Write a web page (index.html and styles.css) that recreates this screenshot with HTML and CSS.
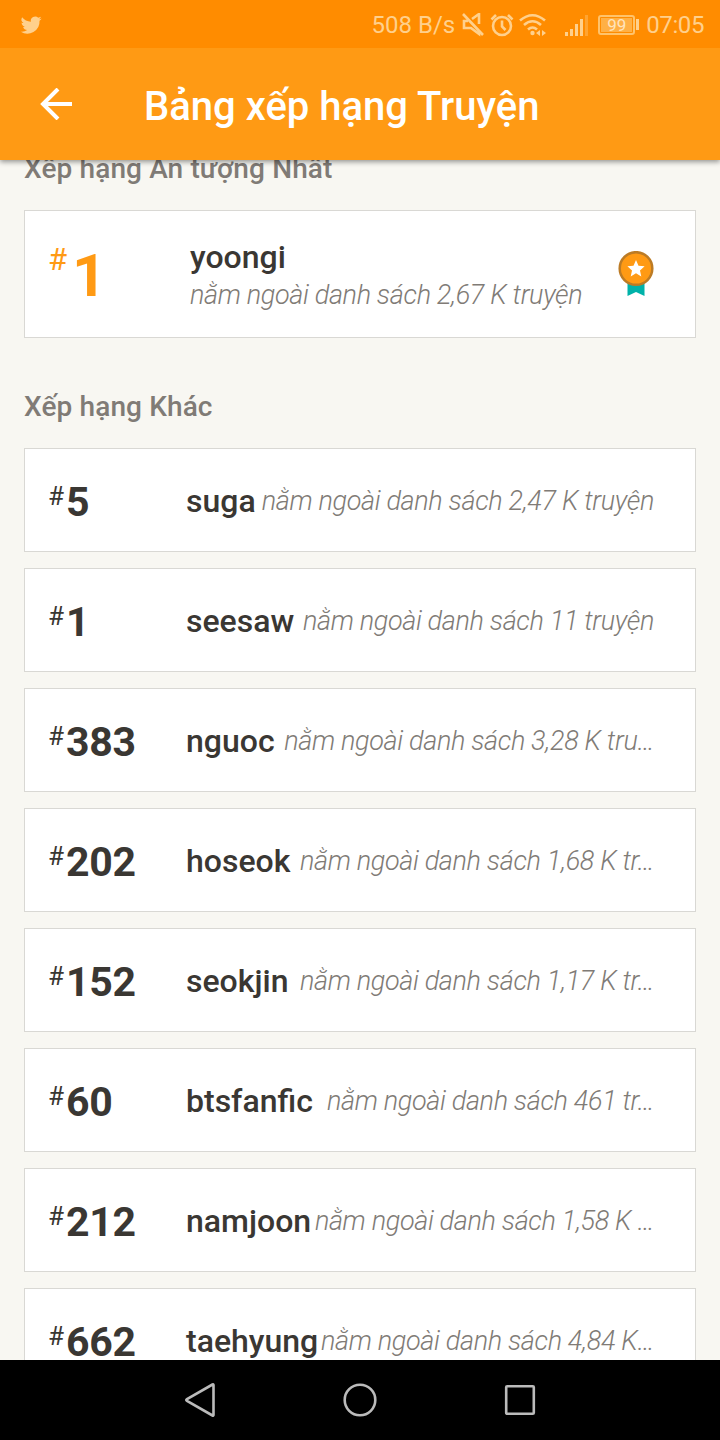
FILE: index.html
```
<!DOCTYPE html>
<html lang="vi">
<head>
    <meta charset="UTF-8">
    <meta name="viewport" content="width=device-width, initial-scale=1.0">
    <title>Bảng xếp hạng Truyện</title>
    <link rel="stylesheet" href="styles.css">
</head>
<body>
    <!-- Phone status bar -->
    <div class="status-bar">
        <svg class="twitter" width="22" height="24" viewBox="0 0 24 24"><path d="M23.6 4.9c-.8.4-1.7.6-2.7.8 1-.6 1.700-1.500 2-2.600-.9.5-1.900.9-3 1.100a4.700 4.700 0 0 0-8 4.300C8 8.300 4.600 6.400 2.300 3.600a4.700 4.700 0 0 0 1.500 6.300c-.8 0-1.500-.2-2.100-.6v.1c0 2.300 1.600 4.200 3.800 4.600-.7.2-1.400.2-2.100.1.600 1.900 2.300 3.200 4.400 3.300A9.500 9.500 0 0 1 .8 19.300a13.300 13.300 0 0 0 20.500-11.900c.9-.7 1.700-1.500 2.300-2.500z"/></svg>
        <div class="status-right">
            <span class="speed">508 B/s</span>
            <svg class="line mute" width="24" height="24" viewBox="0 0 24 24"><path d="M2 1l20 21M11 6l7-5v10M18 17v4l-8-6H3V8h4"/></svg>
            <svg class="line alarm" width="24" height="24" viewBox="0 0 24 24"><circle cx="12" cy="13" r="9"/><path d="M12 7.500v6l3.500 3.500M1.500 6.500L6 2M18 2l4.500 4.500"/></svg>
            <svg class="line wifi" width="30" height="24" viewBox="0 0 30 24"><path d="M1 7.500q12.500-10.500 25 0M5 12q8.500-7.500 17 0M9 16.500q4.500-4 9 0"/><circle class="solid" cx="13.500" cy="20" r="2.200"/><path class="solid" d="M21 17v6l-4-3zM23 17v6l4-3z"/></svg>
            <svg class="signal" width="24" height="24" viewBox="0 0 24 24"><path d="M0 19h3v4H0zM5 16h3v7H5zM10 11h3v12h-3zM15 6h3v17h-3z"/><path opacity=".35" d="M20 2h3v21h-3z"/></svg>
            <span class="battery"><span class="charge">99</span></span>
            <span class="battery-tip"></span>
            <span class="time">07:05</span>
        </div>
    </div>

    <header class="toolbar">
        <svg class="back" width="32" height="32" viewBox="0 0 32 32"><path d="M32 16H2M18 1L3 16l15 15"/></svg>
        <h1>Bảng xếp hạng Truyện</h1>
    </header>

    <main class="content">
        <h2>Xếp hạng Ấn tượng Nhất</h2>
        <section class="card best">
            <div class="rank"><span class="hash">#</span><span class="number">1</span></div>
            <div class="info">
                <span class="tag">yoongi</span>
                <span class="detail">nằm ngoài danh sách 2,67 K truyện</span>
            </div>
            <svg class="medal" width="36" height="46" viewBox="0 0 36 46">
                <path fill="#00b2a9" d="M9.500 30h17v15L18 41l-8.500 4z"/>
                <circle cx="18" cy="17.500" r="16.300" fill="#ff9a14" stroke="#bc7b25" stroke-width="2.500"/>
                <path fill="#fff" d="M18 9l2.500 5.700 6.100.6-4.600 4.100 1.300 6-5.300-3.100-5.300 3.100 1.300-6-4.600-4.100 6.100-.6z"/>
            </svg>
        </section>

        <h2>Xếp hạng Khác</h2>
        <section class="card">
            <div class="rank"><span class="hash">#</span><span class="number">5</span></div>
            <span class="tag">suga</span>
            <span class="detail">nằm ngoài danh sách 2,47 K truyện</span>
        </section>
        <section class="card">
            <div class="rank"><span class="hash">#</span><span class="number">1</span></div>
            <span class="tag">seesaw</span>
            <span class="detail">nằm ngoài danh sách 11 truyện</span>
        </section>
        <section class="card">
            <div class="rank"><span class="hash">#</span><span class="number">383</span></div>
            <span class="tag">nguoc</span>
            <span class="detail">nằm ngoài danh sách 3,28 K tru…</span>
        </section>
        <section class="card">
            <div class="rank"><span class="hash">#</span><span class="number">202</span></div>
            <span class="tag">hoseok</span>
            <span class="detail">nằm ngoài danh sách 1,68 K tr…</span>
        </section>
        <section class="card">
            <div class="rank"><span class="hash">#</span><span class="number">152</span></div>
            <span class="tag">seokjin</span>
            <span class="detail">nằm ngoài danh sách 1,17 K tr…</span>
        </section>
        <section class="card">
            <div class="rank"><span class="hash">#</span><span class="number">60</span></div>
            <span class="tag">btsfanfic</span>
            <span class="detail">nằm ngoài danh sách 461 tr…</span>
        </section>
        <section class="card">
            <div class="rank"><span class="hash">#</span><span class="number">212</span></div>
            <span class="tag">namjoon</span>
            <span class="detail">nằm ngoài danh sách 1,58 K …</span>
        </section>
        <section class="card">
            <div class="rank"><span class="hash">#</span><span class="number">662</span></div>
            <span class="tag">taehyung</span>
            <span class="detail">nằm ngoài danh sách 4,84 K…</span>
        </section>
    </main>

    <!-- Android navigation buttons -->
    <nav class="nav-bar">
        <svg width="34" height="36" viewBox="0 0 34 36"><path d="M30.500 3v30Q30.500 34 29.500 33.500L4 19Q2.500 18 4 17L29.500 2.500Q30.500 2 30.500 3z"/></svg>
        <svg width="34" height="36" viewBox="0 0 34 36"><circle cx="17" cy="18" r="15.300"/></svg>
        <svg width="34" height="36" viewBox="0 0 34 36"><rect x="3.200" y="4.200" width="27.600" height="27.600" rx="1"/></svg>
    </nav>
</body>
</html>
```
FILE: styles.css
```
* {
    box-sizing: border-box;
}

body {
    margin: 0;
    height: 1440px;
    display: flex;
    flex-direction: column;
    overflow: hidden;
    font-family: Roboto, "Noto Sans", sans-serif;
    background-color: #f8f7f2;
    color: #3a3733;
}

h1, h2 {
    margin: 0;
    font-weight: 500;
    white-space: nowrap;
}

svg {
    display: block;
    flex: none;
}

.status-bar {
    height: 48px;
    flex: none;
    display: flex;
    align-items: center;
    justify-content: space-between;
    padding: 1px 16px 0 20px;
    background-color: #ff8c00;
    color: #ffd08c;
    font-size: 24px;
    z-index: 2;
}

.twitter, .signal {
    fill: #ffd08c;
}

.status-right {
    display: flex;
    align-items: center;
}

.line {
    fill: none;
    stroke: #ffd08c;
    stroke-width: 2.6;
}

.solid {
    fill: #ffd08c;
    stroke: none;
}

.mute {
    margin-left: 6px;
}

.alarm {
    margin-left: 5px;
}

.wifi {
    margin-left: 5px;
}

.signal {
    margin-left: 16px;
}

.battery {
    width: 37px;
    height: 20px;
    margin-left: 9px;
    padding: 1px;
    border: 2px solid #ffc36b;
    border-radius: 3px;
}

.charge {
    display: block;
    height: 14px;
    background-color: #ffb045;
    font-size: 17px;
    line-height: 15px;
    text-align: center;
    color: #ffe4bd;
}

.battery-tip {
    width: 3px;
    height: 11px;
    margin: 0 7px 0 1px;
    background-color: #ffd08c;
}

.time {
    letter-spacing: -0.4px;
}

.toolbar {
    height: 112px;
    flex: none;
    display: flex;
    align-items: center;
    gap: 72px;
    padding-left: 40px;
    background-color: #ff9a14;
    color: #fff;
    box-shadow: 0 2px 5px rgba(0, 0, 0, 0.4);
    z-index: 1;
}

.toolbar h1 {
    font-size: 40px;
    padding-top: 4px;
}

.back {
    fill: none;
    stroke: #fff;
    stroke-width: 4;
}

.content {
    flex: 1;
    min-height: 0;
    overflow: hidden;
    padding: 0 24px;
}

.content h2 {
    height: 110px;
    padding-top: 52px;
    font-size: 28px;
    letter-spacing: 0.12px;
    line-height: 34px;
    color: #807b76;
}

/* first heading is partly scrolled under the toolbar */
.content h2:first-child {
    margin-top: -60px;
}

.card {
    height: 104px;
    display: flex;
    align-items: center;
    margin-bottom: 16px;
    padding: 1px 41px 0 23px;
    border: 1px solid #d9d8d4;
    background-color: #fff;
}

.rank {
    width: 138px;
    flex: none;
    display: flex;
    align-items: flex-start;
}

.hash {
    width: 18px;
    flex: none;
    font-size: 26px;
    line-height: 42px;
    font-weight: 400;
}

.number {
    padding-top: 2px;
    font-size: 41px;
    letter-spacing: -0.3px;
    line-height: 50px;
    font-weight: 700;
}

.tag {
    font-size: 32px;
    font-weight: 500;
}

.detail {
    flex: 1;
    font-size: 27px;
    letter-spacing: -0.35px;
    font-style: italic;
    font-weight: 300;
    text-align: right;
    white-space: nowrap;
    color: #807b76;
}

.best {
    height: 128px;
    margin-bottom: 0;
    padding-top: 0;
}

.best .rank {
    width: 142px;
    color: #ff9a14;
}

.best .hash {
    width: 24px;
    font-size: 31px;
    line-height: 46px;
}

.best .number {
    padding-top: 4px;
    font-size: 60px;
    line-height: 70px;
}

.info {
    flex: 1;
    display: flex;
    flex-direction: column;
    gap: 3px;
}

.best .detail {
    text-align: left;
}

.nav-bar {
    height: 80px;
    flex: none;
    display: flex;
    align-items: center;
    justify-content: center;
    gap: 126px;
    background-color: #000;
}

.nav-bar svg {
    fill: none;
    stroke: #bbb;
    stroke-width: 2.6;
}
```
